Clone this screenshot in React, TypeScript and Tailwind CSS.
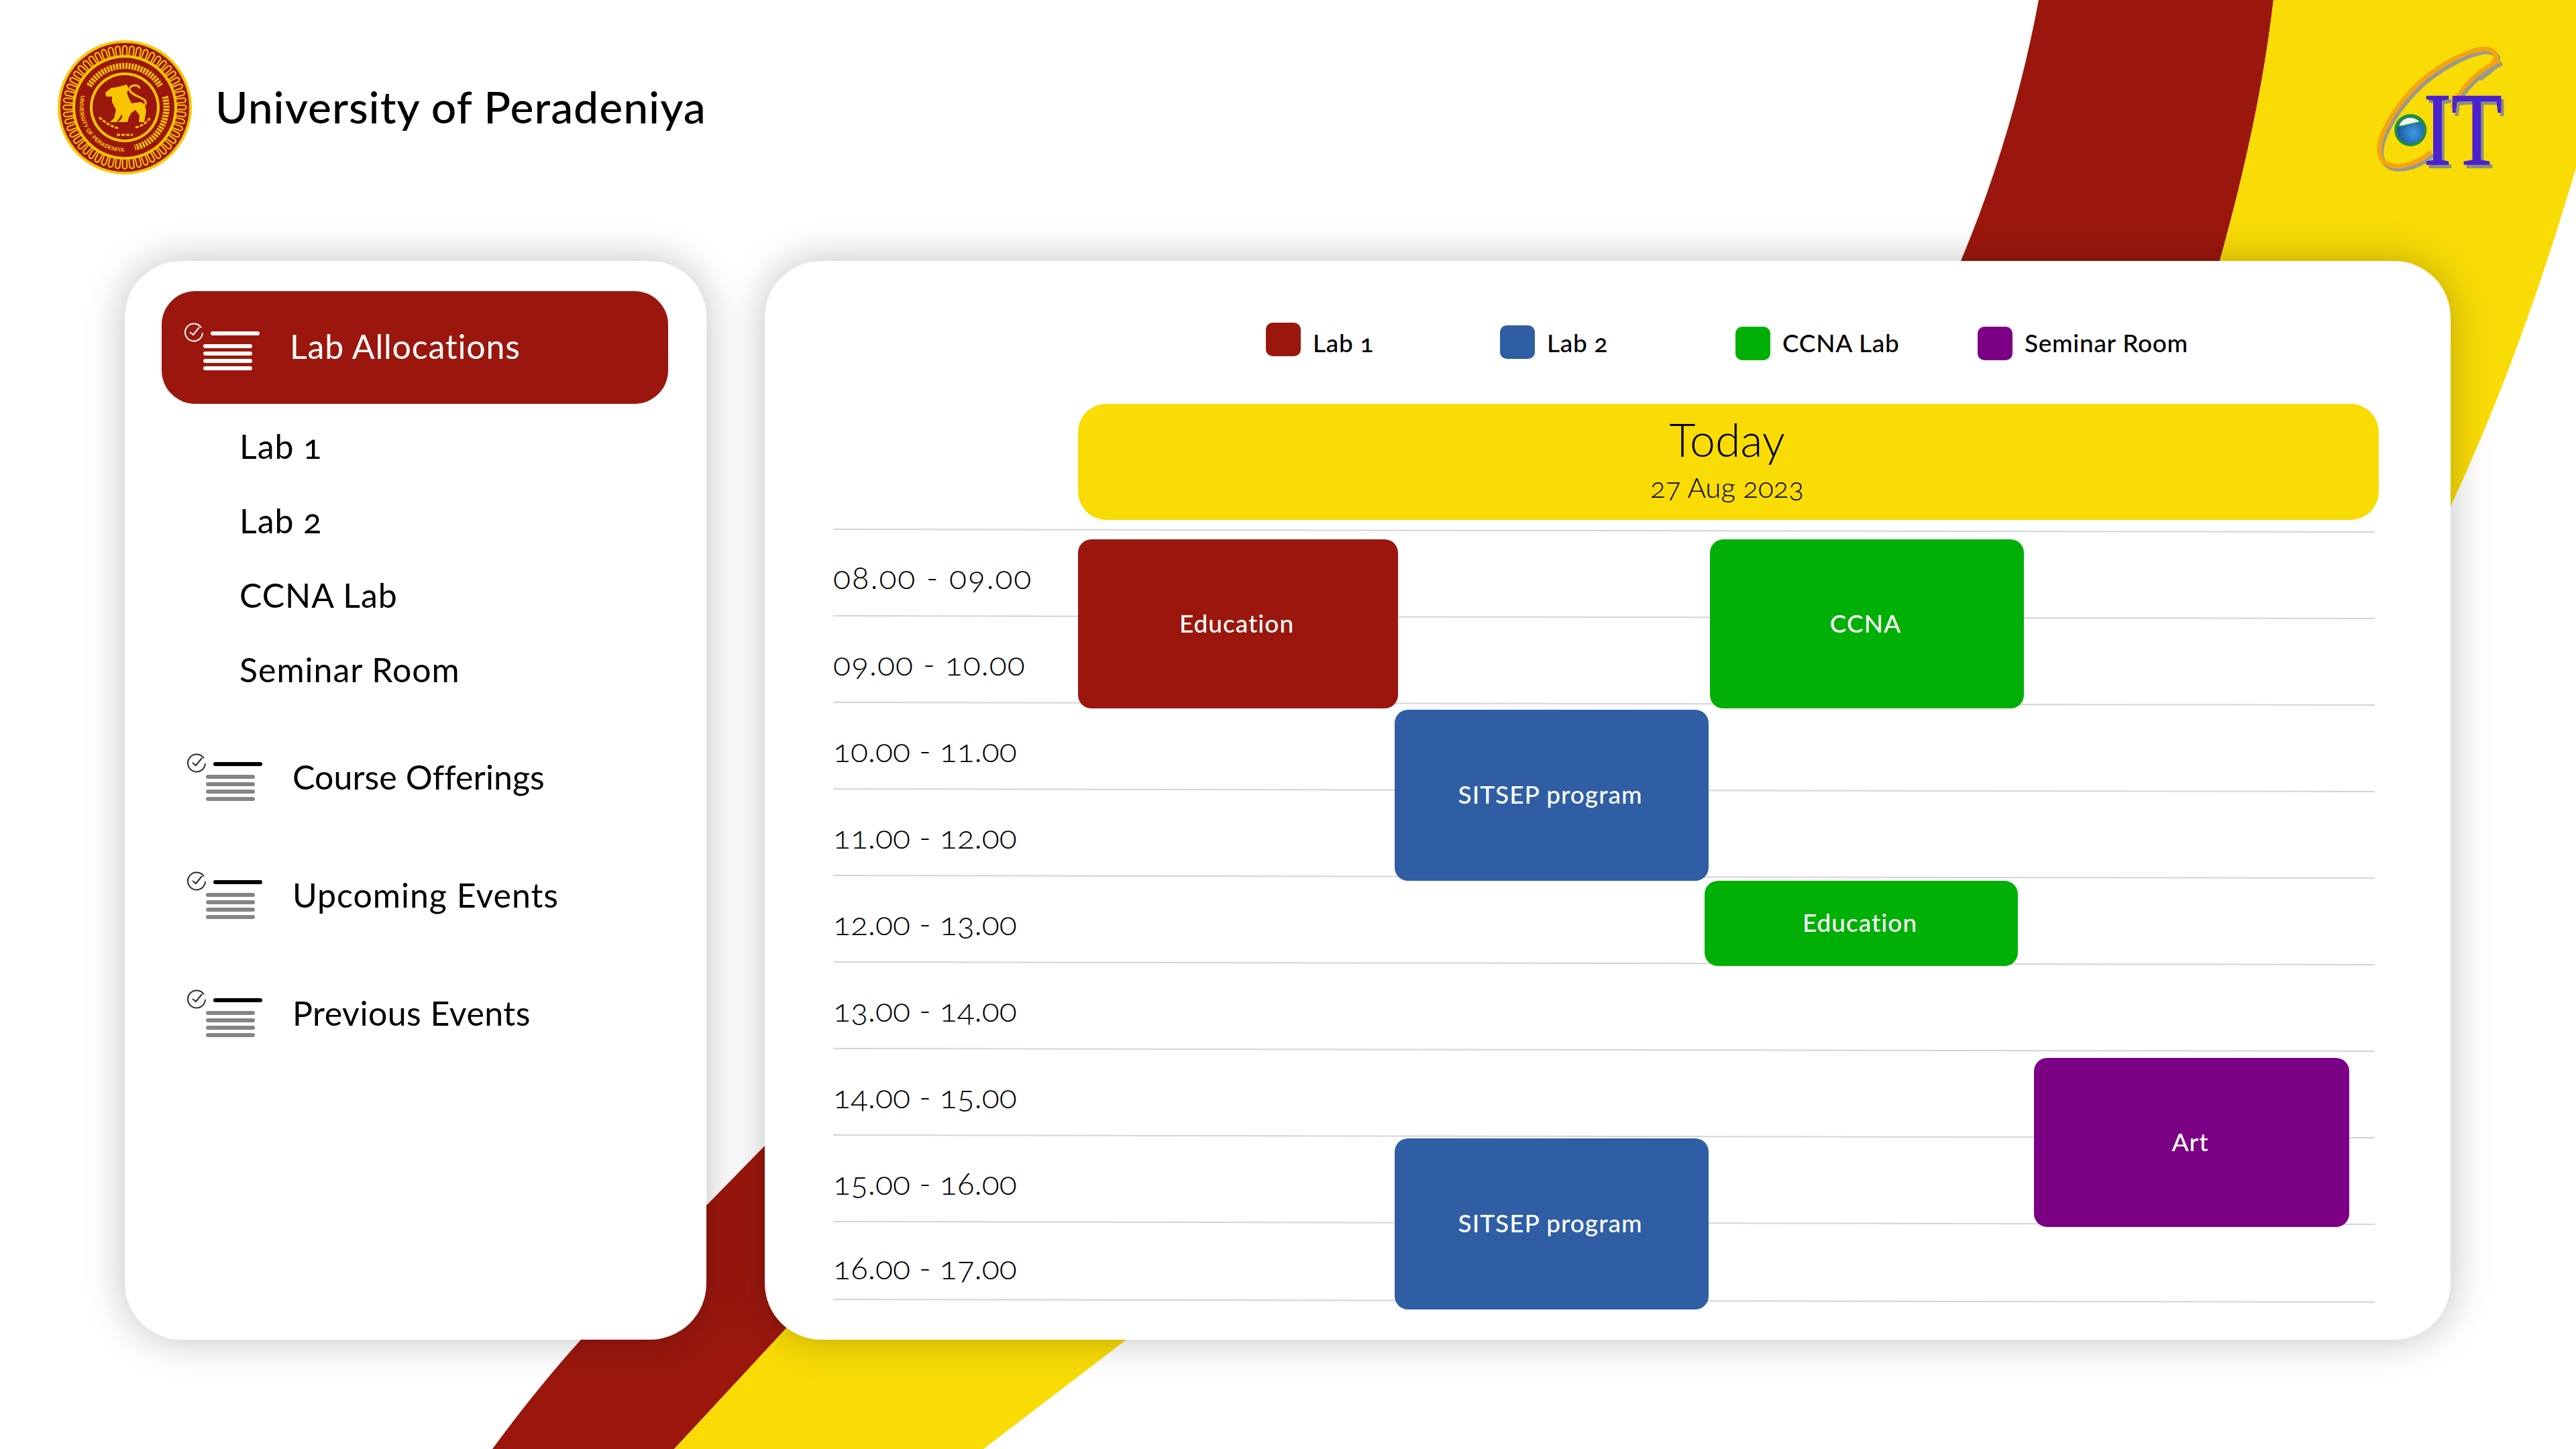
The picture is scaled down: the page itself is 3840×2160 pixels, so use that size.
const legend = [
	{ name: 'Lab 1', box: 'bg-[#9b170d]', cls: 'w-[349px]' },
	{ name: 'Lab 2', box: 'bg-[#2f5ea5] mt-[4px]', cls: 'w-[351px]' },
	{ name: 'CCNA Lab', box: 'bg-[#00b007] mt-[6px]', cls: 'w-[361px]' },
	{ name: 'Seminar Room', box: 'bg-[#7b0083] mt-[6px]', cls: 'w-[400px]' },
]

const times = [
	{ label: '08.00 - 09.00', cls: 'h-[129px] pt-[10px] tracking-[1.8px]' },
	{ label: '09.00 - 10.00', cls: 'h-[129px] pt-[10px] tracking-[1px]' },
	{ label: '10.00 - 11.00', cls: 'h-[129px] pt-[10px]' },
	{ label: '11.00 - 12.00', cls: 'h-[129px] pt-[10px]' },
	{ label: '12.00 - 13.00', cls: 'h-[129px] pt-[10px]' },
	{ label: '13.00 - 14.00', cls: 'h-[129px] pt-[10px]' },
	{ label: '14.00 - 15.00', cls: 'h-[129px] pt-[10px]' },
	{ label: '15.00 - 16.00', cls: 'h-[129px] pt-[10px]' },
	{ label: '16.00 - 17.00', cls: 'h-[116px] pt-[18px]' },
]

const events = [
	{ name: 'Education', cls: 'left-[365px] top-[16px] w-[477px] h-[252px] bg-[#9b170d]' },
	{ name: 'CCNA', cls: 'left-[1307px] top-[16px] w-[468px] h-[252px] bg-[#00b007]' },
	{ name: 'SITSEP program', cls: 'left-[837px] top-[270px] w-[468px] h-[255px] bg-[#2f5ea5]' },
	{ name: 'Education', cls: 'left-[1299px] top-[525px] w-[467px] h-[127px] bg-[#00b007]' },
	{ name: 'Art', cls: 'left-[1790px] top-[789px] w-[470px] h-[252px] bg-[#7b0083]' },
	{ name: 'SITSEP program', cls: 'left-[837px] top-[909px] w-[468px] h-[255px] bg-[#2f5ea5]' },
]

const menu = [
	{ name: 'Course Offerings', cls: 'tracking-[0.1px]' },
	{ name: 'Upcoming Events', cls: 'tracking-[1px]' },
	{ name: 'Previous Events', cls: 'tracking-[0.5px]' },
]

function MenuIcon({ active }: { active?: boolean }) {
	const ring = active ? '#ffffff' : '#2b2b2b'
	const top = active ? '#ffffff' : '#000000'
	const rest = active ? '#ffffff' : '#858585'
	return (
		<svg width="115" height="75" viewBox="0 0 115 75" className="shrink-0">
			<path d="M26 7.5A13 13 0 1 0 28 15" fill="none" stroke={ring} strokeWidth="2" />
			<path d="M9 14l5 4 9-11" fill="none" stroke={ring} strokeWidth="2" />
			<rect x="40" y="13" width="73" height="6" rx="3" fill={top} />
			<rect x="29" y="32" width="73" height="6" rx="3" fill={rest} />
			<rect x="29" y="43" width="73" height="6" rx="3" fill={rest} />
			<rect x="29" y="54" width="73" height="6" rx="3" fill={rest} />
			<rect x="29" y="65" width="73" height="6" rx="3" fill={rest} />
		</svg>
	)
}

function Seal() {
	return (
		<svg width="200" height="200" viewBox="0 0 200 200" className="shrink-0">
			<circle cx="100" cy="100" r="100" fill="#f7c600" />
			<circle cx="100" cy="100" r="96" fill="#9b170d" />
			{Array.from({ length: 52 }, (_, i) => (
				<path
					key={i}
					d="M96.8 23V10.5Q100 6 103.2 10.5V23"
					fill="none"
					stroke="#f7c600"
					strokeWidth="2"
					transform={`rotate(${(i * 360) / 52} 100 100)`}
				/>
			))}
			<circle cx="100" cy="100" r="78" fill="#f7c600" />
			<circle cx="100" cy="100" r="74" fill="#9b170d" />
			<circle cx="100" cy="100" r="52" fill="#f7c600" />
			<circle cx="100" cy="100" r="48" fill="#9b170d" />
			<path d="M47 68A62 62 0 0 1 153 68" fill="none" stroke="#f7c600" strokeWidth="9" strokeDasharray="3 1.6" />
			<path d="M160 84A62 62 0 0 1 115 160" fill="none" stroke="#f7c600" strokeWidth="9" strokeDasharray="3 1.6" />
			<defs>
				<path id="sealText" d="M35 82A67 67 0 0 0 108 166" />
			</defs>
			<text fill="#f7c600" fontSize="8.5" fontWeight="700" fontFamily="Liberation Sans, sans-serif">
				<textPath href="#sealText">UNIVERSITY OF PERADENIYA</textPath>
			</text>
			<path
				d="M71 78L80 71L88 70L96 68L103 66L106 73L103 78L106 86L110 94L124 92L130 96L132 106L129 122L121 122L122 112L116 104L110 108L106 115L104 122L90 122L96 116L96 110L88 122L78 122L84 116L87 104L81 92L81 84L72 84Z"
				fill="#f7c600"
			/>
			<path d="M130 96C138 86 108 84 107 73C107 66 122 65 122 72" fill="none" stroke="#f7c600" strokeWidth="3" />
			<path d="M62 115C70 122 78 128 90 131M116 130C124 128 132 124 138 115M88 141H112" fill="none" stroke="#f7c600" strokeWidth="3" strokeDasharray="5 2" />
		</svg>
	)
}

function ItLogo() {
	return (
		<svg width="260" height="250" viewBox="0 0 780 750" className="shrink-0">
			<defs>
				<radialGradient id="globe" cx="60%" cy="60%" r="60%">
					<stop offset="0" stopColor="#3f9be0" />
					<stop offset="1" stopColor="#14509c" />
				</radialGradient>
			</defs>
			<path d="M372 530C300 590 190 620 150 560C110 490 200 330 330 210C450 110 620 30 660 90C670 130 620 160 580 190" fill="none" stroke="#9a9a8a" strokeWidth="20" transform="translate(10 14)" />
			<path d="M372 530C300 590 190 620 150 560C110 490 200 330 330 210C450 110 620 30 660 90C670 130 620 160 580 190" fill="none" stroke="#f5a411" strokeWidth="20" />
			<path d="M680 120C590 160 510 230 465 330" fill="none" stroke="#9a9a8a" strokeWidth="18" transform="translate(10 14)" />
			<path d="M680 120C590 160 510 230 465 330" fill="none" stroke="#f5a411" strokeWidth="18" />
			<circle cx="280" cy="432" r="66" fill="url(#globe)" stroke="#1f8f45" strokeWidth="12" />
			<path d="M225 415C240 370 290 360 325 395L240 415Z" fill="#f1f4f4" stroke="#1f8f45" strokeWidth="6" />
			<text
				x="350"
				y="600"
				textLength="352"
				lengthAdjust="spacingAndGlyphs"
				fill="#8f8f80"
				stroke="#8f8f80"
				strokeWidth="4"
				fontSize="462"
				fontFamily="Liberation Serif, serif"
			>
				IT
			</text>
			<text
				x="338"
				y="585"
				textLength="352"
				lengthAdjust="spacingAndGlyphs"
				fill="#4a22cf"
				stroke="#4a22cf"
				strokeWidth="4"
				fontSize="462"
				fontFamily="Liberation Serif, serif"
			>
				IT
			</text>
		</svg>
	)
}

export default function App() {
	return (
		<div className="relative w-[3840px] h-[2160px] overflow-hidden bg-white text-black [font-family:Lato,sans-serif]">
			<svg className="absolute inset-0" width="3840" height="2160" viewBox="0 0 3840 2160">
				<path
					d="M3039 0C3015 130 2975 265 2923 389L1139 1709L1053 1797L866 1997Q800 2070 734 2160L1005 2160L1172 1980L3309 389C3350 240 3375 120 3389 0Z"
					fill="#9b170d"
				/>
				<path
					d="M3389 0L3840 0L3840 250C3790 420 3730 590 3653 755L1679 1997L1466 2160L1005 2160L1172 1980L3309 389C3350 240 3375 120 3389 0Z"
					fill="#f9dc06"
				/>
			</svg>

			<div className="relative">
				<header className="flex h-[389px] items-start justify-between pl-[86px] pr-[80px] pt-[60px]">
					<div className="flex items-center gap-[35px]">
						<Seal />
						<h1 className="text-[66px] font-medium leading-none tracking-[1px] pb-[2px]">University of Peradeniya</h1>
					</div>
					<div className="-mt-[10px]">
						<ItLogo />
					</div>
				</header>

				<div className="flex gap-[87px] pl-[186px]">
					<aside className="w-[867px] h-[1608px] rounded-[84px] bg-white shadow-[0_0_60px_rgba(0,0,0,0.25)] pt-[45px] pl-[55px] pr-[57px]">
						<div className="flex h-[168px] items-center gap-[43px] rounded-[50px] bg-[#9b170d] pl-[33px] text-[50px] tracking-[0.8px] text-white">
							<MenuIcon active />
							<span className="pb-[3px]">Lab Allocations</span>
						</div>
						<ul className="mt-[8px] pl-[116px] text-[50px] tracking-[1px]">
							{['Lab 1', 'Lab 2', 'CCNA Lab', 'Seminar Room'].map((lab) => (
								<li key={lab} className="flex h-[111px] items-center oldstyle-nums">
									{lab}
								</li>
							))}
						</ul>
						<div className="mt-[18px]">
							{menu.map((item) => (
								<div key={item.name} className={`flex h-[176px] items-center gap-[43px] pl-[37px] text-[50px] ${item.cls}`}>
									<MenuIcon />
									<span className="pb-[3px]">{item.name}</span>
								</div>
							))}
						</div>
					</aside>

					<main className="w-[2513px] h-[1608px] rounded-[84px] bg-white shadow-[0_0_60px_rgba(0,0,0,0.25)]">
						<div className="flex h-[213px] pl-[747px] pt-[92px] text-[37px] font-medium tracking-[0.7px] oldstyle-nums">
							{legend.map((l) => (
								<div key={l.name} className={`flex items-start gap-[18px] ${l.cls}`}>
									<span className={`h-[50px] w-[52px] rounded-[10px] ${l.box}`} />
									<span className="mt-[2px]">{l.name}</span>
								</div>
							))}
						</div>
						<div className="ml-[467px] flex h-[173px] w-[1939px] flex-col items-center justify-center rounded-[42px] bg-[#f9dc06] pb-[10px] pr-[4px] oldstyle-nums">
							<span className="text-[68px] font-light leading-[84px]">Today</span>
							<span className="text-[42px] font-light leading-[58px]">27 Aug 2023</span>
						</div>
						<div className="relative ml-[102px] mt-[13px] w-[2298px]">
							<div className="h-[2px] origin-left rotate-[0.1deg] bg-[#d4d4d4]" />
							{times.map((t) => (
								<div key={t.label}>
									<div className={`flex items-center text-[48px] font-light oldstyle-nums ${t.cls}`}>{t.label}</div>
									<div className="-mt-[2px] h-[2px] origin-left rotate-[0.1deg] bg-[#d4d4d4]" />
								</div>
							))}
							{events.map((e) => (
								<div
									key={e.name + e.cls}
									className={`absolute flex items-center justify-center rounded-[20px] pb-[3px] pr-[4px] text-[37px] font-medium tracking-[1px] text-white ${e.cls}`}
								>
									{e.name}
								</div>
							))}
						</div>
					</main>
				</div>
			</div>
		</div>
	)
}
